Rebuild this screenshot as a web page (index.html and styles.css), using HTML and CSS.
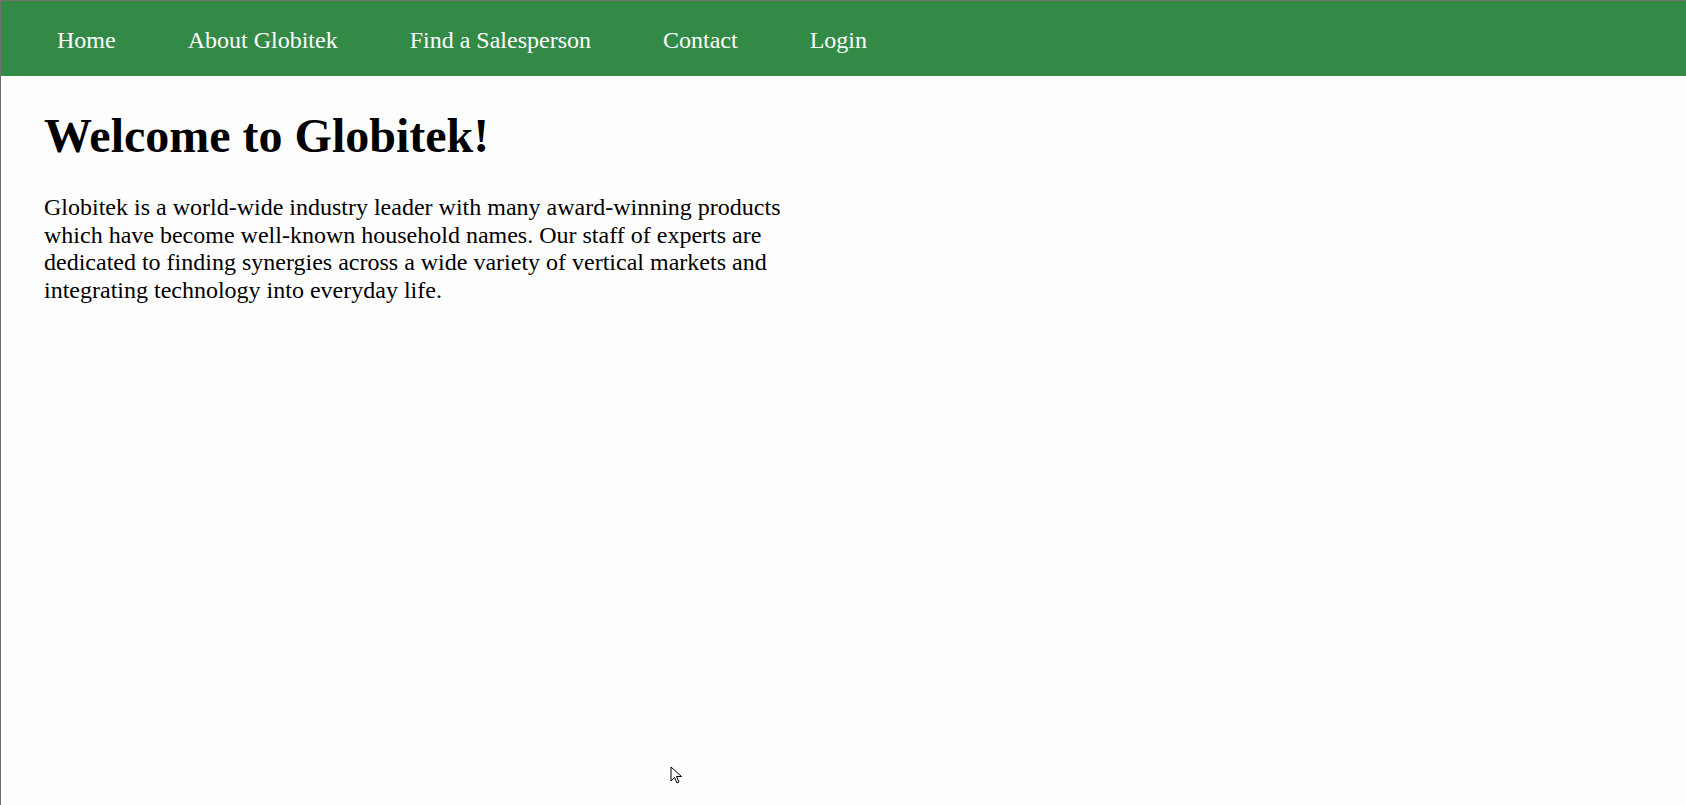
FILE: index.html
```html
<!DOCTYPE html>
<html lang="en">
<head>
<meta charset="utf-8">
<title>Globitek</title>
<link rel="stylesheet" href="styles.css">
</head>
<body>
<div class="frame">
  <nav class="topnav">
    <ul class="menu">
      <li><a href="#">Home</a></li>
      <li><a href="#">About Globitek</a></li>
      <li><a href="#">Find a Salesperson</a></li>
      <li><a href="#">Contact</a></li>
      <li><a href="#">Login</a></li>
    </ul>
  </nav>
  <main class="content">
    <h1 class="title">Welcome to Globitek!</h1>
    <p class="intro">Globitek is a world-wide industry leader with many award-winning products which have become well-known household names. Our staff of experts are dedicated to finding synergies across a wide variety of vertical markets and integrating technology into everyday life.</p>
  </main>
  <svg class="cursor" width="14" height="20" viewBox="0 0 14 20"><path d="M1 1 L1 15 L4.5 11.5 L7 17 L9 16 L6.5 10.5 L11.5 10.5 Z" fill="#fff" stroke="#000" stroke-width="1"/></svg>
</div>
</body>
</html>
```
FILE: styles.css
```css
html, body {
  margin: 0;
  padding: 0;
  height: 100%;
}
body {
  background: #fefefe;
  font-family: "Liberation Serif", "Times New Roman", serif;
  color: #000;
}
.frame {
  position: relative;
  box-sizing: border-box;
  height: 805px;
  border-top: 1px solid #707070;
  border-left: 1px solid #707070;
  overflow: hidden;
}
.topnav {
  background: #338a47;
  height: 75px;
  display: flex;
  align-items: center;
}
.menu {
  list-style: none;
  margin: 0;
  padding: 2px 0 0 20px;
  display: flex;
}
.menu a {
  display: block;
  padding: 0 36px;
  color: #fff;
  text-decoration: none;
  font-size: 24px;
  line-height: 28px;
}
.content {
  padding: 0 43px;
}
.title {
  font-size: 48px;
  font-weight: bold;
  margin: 32px 0 0;
  line-height: 55px;
}
.intro {
  font-size: 24px;
  line-height: 27.5px;
  width: 740px;
  margin: 31px 0 0;
}
.cursor {
  position: absolute;
  left: 669px;
  top: 765px;
}
```
